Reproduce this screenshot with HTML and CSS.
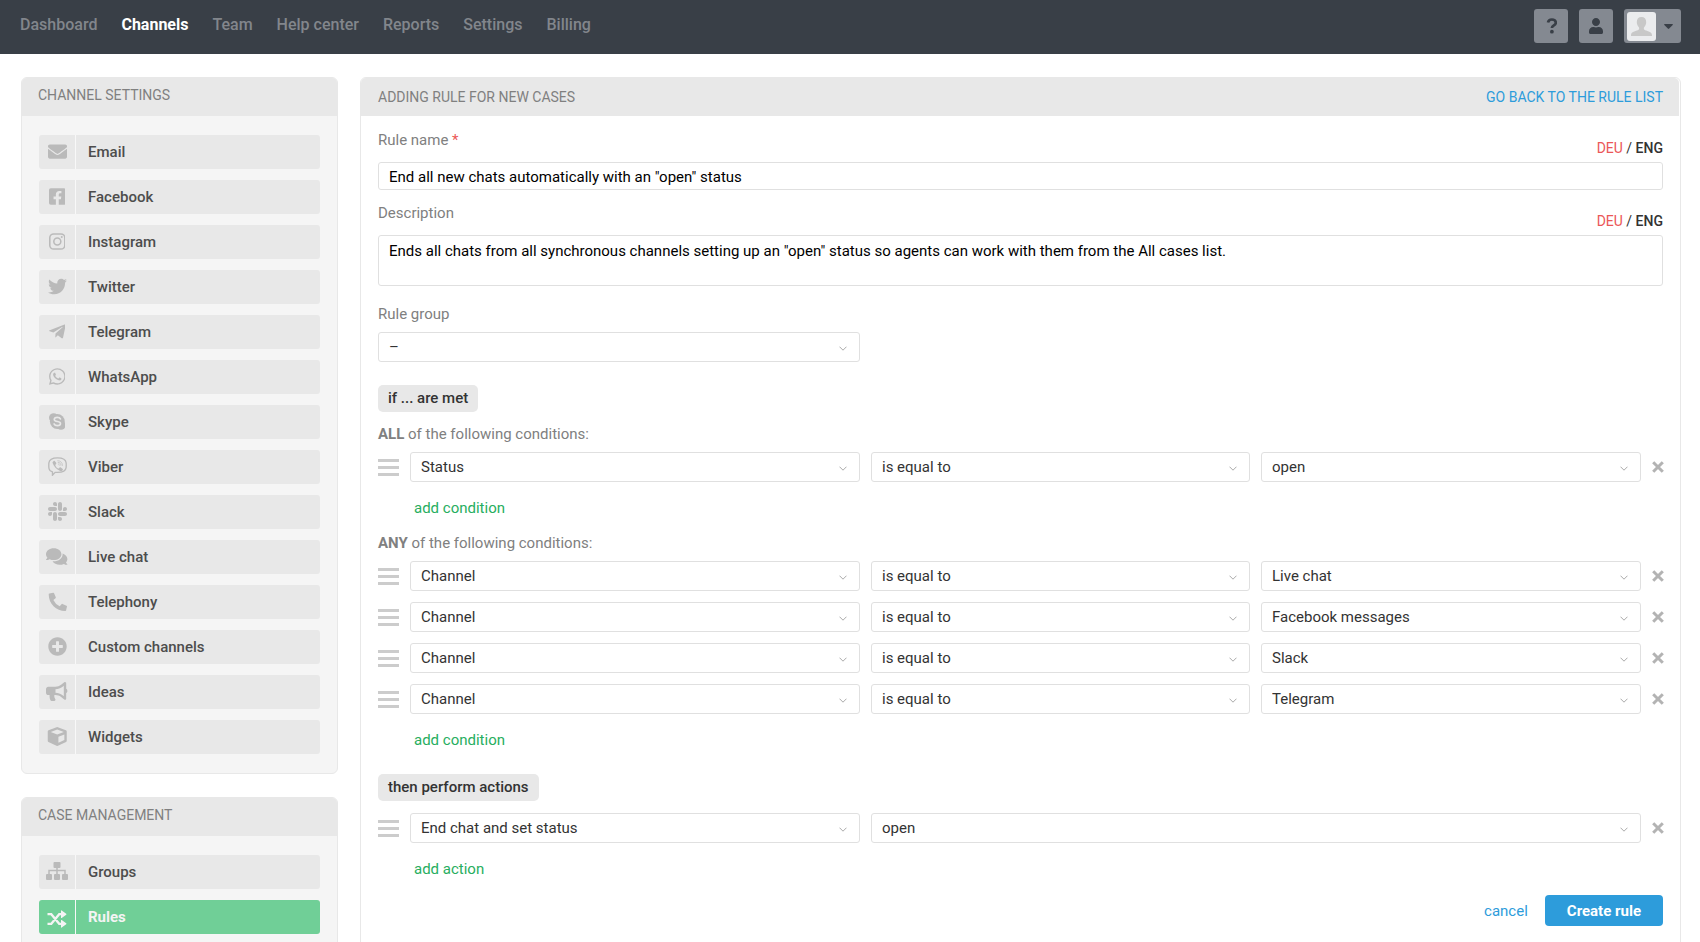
FILE: index.html
```html
<!DOCTYPE html>
<html lang="en">
<head>
<meta charset="utf-8">
<title>Adding rule for new cases</title>
<link rel="stylesheet" href="styles.css">
</head>
<body>
<svg class="sprite" aria-hidden="true">
  <symbol id="i-chevron" viewBox="0 0 8 5"><path d="M.5.7 4 4.200 7.500.7" fill="none" stroke="currentColor"/></symbol>
  <symbol id="i-close" viewBox="0 0 12 12"><path d="M1.200 1.200l9.600 9.600M10.800 1.200l-9.600 9.600" fill="none" stroke="currentColor" stroke-width="3"/></symbol>
</svg>

<header class="topbar">
  <nav class="topnav">
    <a href="#">Dashboard</a>
    <a href="#" class="current">Channels</a>
    <a href="#">Team</a>
    <a href="#">Help center</a>
    <a href="#">Reports</a>
    <a href="#">Settings</a>
    <a href="#">Billing</a>
  </nav>
  <div class="tools">
    <button type="button" class="tool" aria-label="Help"><svg width="12" height="16" viewBox="-1 0 12 16"><path d="M2 4.600C2.400 2.600 3.900 1.500 5.900 1.500c2.200 0 3.900 1.300 3.900 3.200 0 2.700-3.900 2.600-3.900 5.300" fill="none" stroke="currentColor" stroke-width="2.700"/><circle cx="5.900" cy="13.700" r="1.900" fill="currentColor"/></svg></button>
    <button type="button" class="tool" aria-label="Profile"><svg width="14" height="16" viewBox="0 0 448 512"><path fill="currentColor" d="M224 256c70.700 0 128-57.300 128-128S294.700 0 224 0 96 57.300 96 128s57.300 128 128 128zm89.600 32h-16.700c-22.200 10.200-46.900 16-72.900 16s-50.600-5.800-72.900-16h-16.700C60.200 288 0 348.200 0 422.400V464c0 26.500 21.500 48 48 48h352c26.500 0 48-21.500 48-48v-41.600c0-74.200-60.200-134.400-134.400-134.400z"/></svg></button>
    <button type="button" class="tool account" aria-label="Account menu">
      <span class="avatar"><svg width="21" height="19" viewBox="0 0 21 19"><path fill="#c8c8c8" d="M10.500 0c3 0 4.700 2 4.700 4.900 0 1.900-.7 3.900-1.900 5.200-.6.700-.7 2.100.1 2.700 1.400 1.200 7.600 1.500 7.600 5.200v1H0v-1c0-3.700 6.200-4 7.600-5.200.8-.6.7-2 .1-2.700-1.200-1.300-1.900-3.300-1.900-5.200C5.800 2 7.500 0 10.500 0z"/></svg></span>
      <svg width="9" height="5" viewBox="0 0 9 5"><path fill="currentColor" d="M.7 0h7.600q.9.200.4.900L5.200 4.600q-.7.600-1.400 0L.3.900Q-.2.200.7 0z"/></svg>
    </button>
  </div>
</header>

<div class="page">
  <aside class="sidebar">
    <section class="panel">
      <h2 class="panel-title">CHANNEL SETTINGS</h2>
      <ul class="menu">
        <li><a href="#"><span class="icon"><svg viewBox="0 0 512 512"><path d="M502.300 190.800c3.900-3.100 9.700-.2 9.700 4.700V400c0 26.500-21.500 48-48 48H48c-26.500 0-48-21.500-48-48V195.600c0-5 5.700-7.800 9.700-4.700 22.400 17.400 52.100 39.500 154.100 113.600 21.100 15.400 56.700 47.800 92.200 47.600 35.700.3 72-32.800 92.300-47.600 102-74.100 131.600-96.300 154-113.700zM256 320c23.200.4 56.600-29.200 73.400-41.400 132.700-96.300 142.800-104.700 173.400-128.700 5.800-4.500 9.200-11.500 9.200-18.900v-19c0-26.500-21.500-48-48-48H48c-26.500 0-48 21.500-48 48v19c0 7.400 3.400 14.300 9.200 18.900 30.600 23.900 40.700 32.400 173.400 128.700 16.800 12.200 50.200 41.800 73.400 41.400z"/></svg></span>Email</a></li>
        <li><a href="#"><span class="icon"><svg viewBox="0 0 448 512"><path d="M400 32H48A48 48 0 0 0 0 80v352a48 48 0 0 0 48 48h137.250V327.690h-63V256h63v-54.640c0-62.150 37-96.480 93.670-96.480 27.140 0 55.520 4.840 55.520 4.840v61h-31.270c-30.810 0-40.420 19.120-40.420 38.730V256h68.780l-11 71.690h-57.780V480H400a48 48 0 0 0 48-48V80a48 48 0 0 0-48-48z"/></svg></span>Facebook</a></li>
        <li><a href="#"><span class="icon"><svg viewBox="0 0 448 512"><g fill="none" stroke="currentColor" stroke-width="42"><rect x="21" y="53" width="406" height="406" rx="105"/><circle cx="224" cy="256" r="94"/></g><circle cx="343" cy="137" r="27"/></svg></span>Instagram</a></li>
        <li><a href="#"><span class="icon"><svg viewBox="0 0 512 512"><path d="M459.370 151.716c.325 4.548.325 9.097.325 13.645 0 138.720-105.583 298.558-298.558 298.558-59.452 0-114.680-17.219-161.137-47.106 8.447.974 16.568 1.299 25.340 1.299 49.055 0 94.213-16.568 130.274-44.832-46.132-.975-84.792-31.188-98.112-72.772 6.498.974 12.995 1.624 19.818 1.624 9.421 0 18.843-1.300 27.614-3.573-48.081-9.747-84.143-51.980-84.143-102.985v-1.299c13.969 7.797 30.214 12.670 47.431 13.319-28.264-18.843-46.781-51.005-46.781-87.391 0-19.492 5.197-37.360 14.294-52.954 51.655 63.675 129.300 105.258 216.365 109.807-1.624-7.797-2.599-15.918-2.599-24.040 0-57.828 46.782-104.934 104.934-104.934 30.213 0 57.502 12.670 76.670 33.137 23.715-4.548 46.456-13.320 66.599-25.340-7.798 24.366-24.366 44.833-46.132 57.827 21.117-2.273 41.584-8.122 60.426-16.243-14.292 20.791-32.161 39.308-52.628 54.253z"/></svg></span>Twitter</a></li>
        <li><a href="#"><span class="icon"><svg viewBox="0 0 448 512"><path d="M446.700 98.600l-67.600 318.800c-5.100 22.500-18.400 28.100-37.300 17.500l-103-75.900-49.700 47.800c-5.500 5.500-10.100 10.100-20.700 10.100l7.400-104.900 190.900-172.500c8.300-7.400-1.800-11.500-12.900-4.100L117.800 284 16.200 252.200c-22.100-6.900-22.500-22.100 4.600-32.700L418.200 66.400c18.400-6.900 34.500 4.100 28.500 32.200z"/></svg></span>Telegram</a></li>
        <li><a href="#"><span class="icon"><svg viewBox="0 0 448 512"><path d="M380.900 97.100C339 55.100 283.200 32 223.900 32c-122.400 0-222 99.600-222 222 0 39.100 10.200 77.300 29.600 111L0 480l117.700-30.900c32.400 17.700 68.900 27 106.100 27h.1c122.300 0 224.100-99.600 224.100-222 0-59.300-25.200-115-67.100-157zm-157 341.600c-33.200 0-65.700-8.900-94-25.700l-6.700-4-69.800 18.300L72 359.200l-4.400-7c-18.500-29.400-28.200-63.300-28.200-98.200 0-101.700 82.800-184.500 184.600-184.500 49.300 0 95.600 19.200 130.400 54.100 34.800 34.900 56.200 81.200 56.100 130.500 0 101.800-84.900 184.600-186.600 184.600zm101.200-138.200c-5.500-2.800-32.800-16.200-37.900-18-5.100-1.900-8.800-2.800-12.500 2.800-3.700 5.600-14.300 18-17.600 21.800-3.200 3.700-6.500 4.200-12 1.400-32.600-16.300-54-29.100-75.500-66-5.700-9.800 5.700-9.100 16.300-30.300 1.800-3.700.9-6.900-.5-9.700-1.400-2.800-12.500-30.100-17.100-41.200-4.500-10.800-9.100-9.300-12.500-9.500-3.200-.2-6.900-.2-10.600-.2-3.700 0-9.700 1.400-14.800 6.900-5.100 5.600-19.400 19-19.400 46.300 0 27.300 19.900 53.700 22.600 57.400 2.800 3.700 39.100 59.700 94.800 83.800 35.200 15.200 49 16.500 66.600 13.900 10.700-1.600 32.800-13.400 37.400-26.400 4.600-13 4.600-24.100 3.200-26.400-1.300-2.500-5-3.900-10.500-6.600z"/></svg></span>WhatsApp</a></li>
        <li><a href="#"><span class="icon"><svg viewBox="0 0 448 512"><circle cx="224" cy="256" r="200"/><circle cx="125" cy="157" r="125"/><circle cx="323" cy="355" r="125"/><path d="M308 186c-12-28-40-42-82-42-50 0-84 22-84 56 0 78 168 34 168 108 0 36-36 58-84 58-46 0-76-16-90-46" fill="none" stroke="#e8e8e8" stroke-width="44" stroke-linecap="round"/></svg></span>Skype</a></li>
        <li><a href="#"><span class="icon"><svg viewBox="0 0 512 512"><path d="M256 22C130 22 36 45 24 160c-5 60-5 100 3 150 8 52 43 78 93 92v88l72-76c26 2 45 2 64 2 126-1 220-24 232-130 5-50 5-90 0-130C476 45 382 22 256 22z" fill="none" stroke="currentColor" stroke-width="36"/><path d="M150 112c20-14 30-8 42 8l28 38c10 14 4 28-10 40-18 14-14 26-6 42 16 34 36 54 68 68 20 8 26-4 36-16 10-14 24-16 38-8l42 30c18 12 18 26 8 40-20 28-42 36-70 24-98-46-166-116-202-216-6-20 6-38 26-50z"/><path d="M264 100c80 4 122 50 126 128M272 144c50 4 74 32 76 80M278 188c18 2 28 12 28 32" fill="none" stroke="currentColor" stroke-width="18" stroke-linecap="round"/></svg></span>Viber</a></li>
        <li><a href="#"><span class="icon"><svg viewBox="0 32 448 448"><path d="M94.120 315.100c0 25.900-21.160 47.060-47.060 47.060S0 341 0 315.100c0-25.900 21.160-47.060 47.060-47.060h47.060v47.060zm23.720 0c0-25.900 21.160-47.060 47.060-47.060s47.060 21.160 47.060 47.060v117.840c0 25.900-21.160 47.060-47.060 47.060s-47.060-21.160-47.060-47.060V315.100zm47.060-188.980c-25.900 0-47.060-21.160-47.060-47.060S139 32 164.900 32s47.060 21.160 47.060 47.060v47.060H164.900zm0 23.720c25.900 0 47.060 21.160 47.060 47.060s-21.160 47.060-47.060 47.060H47.060C21.160 243.960 0 222.800 0 196.900s21.160-47.060 47.060-47.060H164.900zm188.980 47.060c0-25.900 21.160-47.060 47.060-47.060 25.900 0 47.060 21.160 47.060 47.060s-21.160 47.060-47.060 47.060h-47.060V196.900zm-23.720 0c0 25.900-21.160 47.060-47.060 47.060-25.900 0-47.060-21.160-47.060-47.060V79.060c0-25.900 21.160-47.060 47.060-47.060 25.900 0 47.060 21.160 47.060 47.060V196.900zM283.100 385.880c25.900 0 47.060 21.160 47.060 47.060 0 25.900-21.160 47.060-47.060 47.060-25.900 0-47.060-21.160-47.060-47.060v-47.060h47.060zm0-23.720c-25.900 0-47.060-21.160-47.060-47.060 0-25.900 21.160-47.060 47.060-47.060h117.840c25.900 0 47.060 21.160 47.060 47.060 0 25.900-21.160 47.060-47.060 47.060H283.100z"/></svg></span>Slack</a></li>
        <li><a href="#"><span class="icon"><svg viewBox="0 0 576 512"><path d="M416 192c0-88.400-93.100-160-208-160S0 103.600 0 192c0 34.300 14.100 65.900 38 92-13.400 30.200-35.500 54.200-35.800 54.500-2.200 2.300-2.800 5.700-1.500 8.700S4.800 352 8 352c36.600 0 66.900-12.300 88.700-25 32.200 15.700 70.300 25 111.300 25 114.900 0 208-71.600 208-160zm122 220c23.900-26 38-57.700 38-92 0-66.900-53.500-124.200-129.300-148.100.9 6.600 1.300 13.300 1.300 20.100 0 105.900-107.700 192-240 192-10.800 0-21.300-.8-31.700-1.900C207.800 439.600 281.800 480 368 480c41 0 79.100-9.200 111.300-25 21.800 12.700 52.100 25 88.700 25 3.200 0 6.100-1.900 7.300-4.800 1.300-2.900.7-6.300-1.500-8.700-.3-.3-22.400-24.200-35.800-54.500z"/></svg></span>Live chat</a></li>
        <li><a href="#"><span class="icon"><svg viewBox="-20 -20 532 532"><path d="M497.390 361.800l-112-48a24 24 0 0 0-28 6.900l-49.600 60.600A370.660 370.660 0 0 1 130.600 204.110l60.600-49.600a23.940 23.940 0 0 0 6.900-28l-48-112A24.160 24.160 0 0 0 122.600.61l-104 24A24 24 0 0 0 0 48c0 256.500 207.900 464 464 464a24 24 0 0 0 23.400-18.600l24-104a24.290 24.290 0 0 0-14.010-27.600z"/></svg></span>Telephony</a></li>
        <li><a href="#"><span class="icon"><svg viewBox="0 0 512 512"><path d="M256 8C119 8 8 119 8 256s111 248 248 248 248-111 248-248S393 8 256 8zm144 276c0 6.600-5.400 12-12 12h-92v92c0 6.600-5.400 12-12 12h-56c-6.600 0-12-5.400-12-12v-92h-92c-6.600 0-12-5.400-12-12v-56c0-6.600 5.400-12 12-12h92v-92c0-6.600 5.400-12 12-12h56c6.600 0 12 5.400 12 12v92h92c6.600 0 12 5.400 12 12v56z"/></svg></span>Custom channels</a></li>
        <li><a href="#"><span class="icon"><svg viewBox="0 0 576 512"><path d="M576 240c0-23.630-12.950-44.040-32-55.120V32.010C544 23.260 537.020 0 512 0c-7.120 0-14.190 2.380-19.980 7.020l-85.030 68.030C364.280 109.190 310.660 128 256 128H64c-35.350 0-64 28.650-64 64v96c0 35.350 28.650 64 64 64h33.700c-1.390 10.480-2.180 21.140-2.180 32 0 39.770 9.260 77.350 25.560 110.940 5.190 10.690 16.520 17.060 28.400 17.060h74.280c26.050 0 41.690-29.840 25.900-50.560-16.400-21.520-26.150-48.360-26.150-77.440 0-11.110 1.620-21.790 4.410-32H256c54.660 0 108.280 18.810 150.980 52.950l85.030 68.030a32.023 32.023 0 0 0 19.980 7.020c24.920 0 32-22.780 32-32V295.130C563.050 284.040 576 263.630 576 240zm-96 141.420l-33.050-26.440C392.950 311.780 325.120 288 256 288v-96c69.120 0 136.950-23.780 190.950-66.980L480 98.580v282.840z"/></svg></span>Ideas</a></li>
        <li><a href="#"><span class="icon"><svg viewBox="-20 0 532 512"><path fill-rule="evenodd" d="M239 6 22 87Q0 96 0 118v254q0 21 19 31l217 105q20 8 40 0l217-105q19-10 19-31V118q0-22-22-31L273 6q-17-6-34 0zM256 68 432 134 256 205 80 134zM288 427V265l160-65v147z"/></svg></span>Widgets</a></li>
      </ul>
    </section>
    <section class="panel">
      <h2 class="panel-title">CASE MANAGEMENT</h2>
      <ul class="menu">
        <li><a href="#"><span class="icon"><svg viewBox="0 0 22 19"><rect x="7.500" y="0" width="7" height="6" rx="1"/><rect x="0" y="12" width="6" height="6" rx="1"/><rect x="8" y="12" width="6" height="6" rx="1"/><rect x="16" y="12" width="6" height="6" rx="1"/><path d="M11 5v8M3 13V8.500h16V13" fill="none" stroke="currentColor" stroke-width="1.500"/></svg></span>Groups</a></li>
        <li><a href="#" class="active"><span class="icon"><svg viewBox="0 0 20 19"><g fill="none" stroke="currentColor" stroke-width="2.300"><path d="M.5 5.200h3.800L12.200 14.800H16M.5 14.800h3.800L12.200 5.200H16"/></g><path d="M14 1.700Q14 1 14.700 1.500L19.200 4.700q.5.500 0 1L14.700 8.900Q14 9.400 14 8.700zM14 11.300q0-.7.7-.2l4.500 3.200q.5.500 0 1l-4.500 3.200q-.7.500-.7-.2z"/></svg></span>Rules</a></li>
      </ul>
    </section>
  </aside>

  <main class="panel editor">
    <div class="editor-head">
      <h1>ADDING RULE FOR NEW CASES</h1>
      <a href="#">GO BACK TO THE RULE LIST</a>
    </div>
    <form class="editor-body">
      <div class="field">
        <div class="field-head">
          <label for="name">Rule name <span class="required">*</span></label>
          <span class="langs"><a href="#">DEU</a> / <b>ENG</b></span>
        </div>
        <input id="name" type="text" value="End all new chats automatically with an &quot;open&quot; status">
      </div>
      <div class="field">
        <div class="field-head">
          <label for="description">Description</label>
          <span class="langs"><a href="#">DEU</a> / <b>ENG</b></span>
        </div>
        <textarea id="description">Ends all chats from all synchronous channels setting up an "open" status so agents can work with them from the All cases list.</textarea>
      </div>
      <div class="field group-field">
        <label for="group">Rule group</label>
        <div class="row">
          <span class="select lead"><select id="group"><option>–</option></select><svg><use href="#i-chevron"/></svg></span>
        </div>
      </div>

      <h3 class="step">if ... are met</h3>
      <p class="match"><b>ALL</b> of the following conditions:</p>
      <div class="rows">
        <div class="row">
          <span class="handle"></span>
          <span class="select"><select aria-label="Field"><option>Status</option></select><svg><use href="#i-chevron"/></svg></span>
          <span class="select"><select aria-label="Operator"><option>is equal to</option></select><svg><use href="#i-chevron"/></svg></span>
          <span class="select"><select aria-label="Value"><option>open</option></select><svg><use href="#i-chevron"/></svg></span>
          <button type="button" class="remove" aria-label="Remove"><svg><use href="#i-close"/></svg></button>
        </div>
      </div>
      <a href="#" class="add">add condition</a>

      <p class="match any"><b>ANY</b> of the following conditions:</p>
      <div class="rows">
        <div class="row">
          <span class="handle"></span>
          <span class="select"><select aria-label="Field"><option>Channel</option></select><svg><use href="#i-chevron"/></svg></span>
          <span class="select"><select aria-label="Operator"><option>is equal to</option></select><svg><use href="#i-chevron"/></svg></span>
          <span class="select"><select aria-label="Value"><option>Live chat</option></select><svg><use href="#i-chevron"/></svg></span>
          <button type="button" class="remove" aria-label="Remove"><svg><use href="#i-close"/></svg></button>
        </div>
        <div class="row">
          <span class="handle"></span>
          <span class="select"><select aria-label="Field"><option>Channel</option></select><svg><use href="#i-chevron"/></svg></span>
          <span class="select"><select aria-label="Operator"><option>is equal to</option></select><svg><use href="#i-chevron"/></svg></span>
          <span class="select"><select aria-label="Value"><option>Facebook messages</option></select><svg><use href="#i-chevron"/></svg></span>
          <button type="button" class="remove" aria-label="Remove"><svg><use href="#i-close"/></svg></button>
        </div>
        <div class="row">
          <span class="handle"></span>
          <span class="select"><select aria-label="Field"><option>Channel</option></select><svg><use href="#i-chevron"/></svg></span>
          <span class="select"><select aria-label="Operator"><option>is equal to</option></select><svg><use href="#i-chevron"/></svg></span>
          <span class="select"><select aria-label="Value"><option>Slack</option></select><svg><use href="#i-chevron"/></svg></span>
          <button type="button" class="remove" aria-label="Remove"><svg><use href="#i-close"/></svg></button>
        </div>
        <div class="row">
          <span class="handle"></span>
          <span class="select"><select aria-label="Field"><option>Channel</option></select><svg><use href="#i-chevron"/></svg></span>
          <span class="select"><select aria-label="Operator"><option>is equal to</option></select><svg><use href="#i-chevron"/></svg></span>
          <span class="select"><select aria-label="Value"><option>Telegram</option></select><svg><use href="#i-chevron"/></svg></span>
          <button type="button" class="remove" aria-label="Remove"><svg><use href="#i-close"/></svg></button>
        </div>
      </div>
      <a href="#" class="add">add condition</a>

      <h3 class="step then">then perform actions</h3>
      <div class="rows actions">
        <div class="row">
          <span class="handle"></span>
          <span class="select"><select aria-label="Action"><option>End chat and set status</option></select><svg><use href="#i-chevron"/></svg></span>
          <span class="select wide"><select aria-label="Status"><option>open</option></select><svg><use href="#i-chevron"/></svg></span>
          <button type="button" class="remove" aria-label="Remove"><svg><use href="#i-close"/></svg></button>
        </div>
      </div>
      <a href="#" class="add">add action</a>

      <div class="buttons">
        <a href="#">cancel</a>
        <button type="submit" class="submit">Create rule</button>
      </div>
    </form>
  </main>
</div>
</body>
</html>
```
FILE: styles.css
```css
* { box-sizing: border-box; }

body {
  margin: 0;
  height: 100vh;
  overflow: hidden;
  background: #fff;
  color: #333;
  font: 15px/20px Roboto, "Liberation Sans", sans-serif;
}

a { color: #2d9cdb; text-decoration: none; }
h1, h2, h3, p, ul { margin: 0; padding: 0; font: inherit; }
button, input, select, textarea { font: inherit; margin: 0; }
svg { display: block; flex: none; }
.sprite { display: none; }

/* Top bar */
.topbar {
  display: flex;
  justify-content: space-between;
  height: 54px;
  padding: 9px 19px 0 20px;
  background: #393f47;
}
.topnav { display: flex; gap: 24px; padding-top: 6px; font-size: 16px; }
.topnav a { color: #82868c; font-weight: 500; }
.topnav .current { color: #fff; font-weight: 700; }
.tools { display: flex; gap: 11px; }
.tool {
  display: flex;
  align-items: center;
  justify-content: center;
  width: 34px;
  height: 34px;
  padding: 0;
  border: 0;
  border-radius: 3px;
  background: #848991;
  color: #393f47;
}
.account { justify-content: flex-start; gap: 8px; width: 57px; padding-left: 3px; }
.avatar {
  display: flex;
  align-items: center;
  justify-content: center;
  width: 29px;
  height: 29px;
  border-radius: 3px;
  background: #ebecee;
}

/* Layout */
.page { display: flex; align-items: flex-start; gap: 22px; padding: 23px 19px 23px 21px; }
.sidebar { display: flex; flex: none; flex-direction: column; gap: 23px; width: 317px; }
.panel { border: 1px solid #e8e8e8; border-radius: 6px; overflow: hidden; }

/* Sidebar */
.sidebar .panel { background: #f5f5f5; }
.panel-title {
  height: 38px;
  padding: 7px 16px 0;
  background: #e8e8e8;
  color: #808080;
  font-size: 14px;
}
.menu {
  display: flex;
  flex-direction: column;
  gap: 11px;
  padding: 19px 17px;
  list-style: none;
}
.menu a {
  display: flex;
  align-items: center;
  gap: 12px;
  height: 34px;
  border-radius: 3px;
  background: #e8e8e8;
  color: #4d4d4d;
  font-weight: 500;
}
.icon {
  display: flex;
  align-items: center;
  justify-content: center;
  width: 37px;
  height: 34px;
  padding-bottom: 2px;
  border-right: 1px solid #f8f8f8;
  color: #bababa;
}
.icon svg { height: 19px; fill: currentColor; }
.menu .active { background: #70cf97; color: #f4f4f4; font-weight: 700; }
.active .icon { padding: 2px 0 0; color: #f4f4f4; }

/* Editor */
.editor { flex: 1; min-width: 0; padding-right: 1px; }
.editor-head {
  display: flex;
  justify-content: space-between;
  height: 38px;
  padding: 9px 16px 0 17px;
  border-radius: 0 5px 0 0;
  background: #e8e8e8;
  color: #808080;
  font-size: 14px;
}
.editor-body { padding: 14px 16px 24px 17px; }
.field { margin-bottom: 13px; }
.field label { display: block; color: #808080; }
.field-head { display: flex; justify-content: space-between; height: 28px; margin-bottom: 4px; }
.required, .langs a { color: #eb5757; }
.langs { align-self: flex-end; font-size: 14px; }
.langs b { font-weight: 500; }
.field input, .field textarea {
  display: block;
  width: 100%;
  height: 28px;
  padding: 2px 10px 0;
  border: 1px solid #e0e0e0;
  border-radius: 3px;
  background: #fff;
  color: #000;
}
.field textarea { height: 51px; padding: 5px 10px; resize: none; }
.group-field { margin: 18px 0 23px; }
.group-field label { margin-bottom: 8px; }

.step {
  width: fit-content;
  height: 27px;
  padding: 3px 10px;
  border-radius: 5px;
  background: #e8e8e8;
  font-weight: 500;
}
.then { margin-top: 24px; }
.match { margin: 12px 0 8px; color: #808080; }
.match b { font-weight: 700; }
.any { margin-top: 15px; }

.rows { display: grid; gap: 11px; }
.actions { margin-top: 12px; }
.row {
  display: grid;
  grid-template-columns: 21px 450fr 379fr 380fr 11px;
  column-gap: 11px;
  align-items: center;
}
.lead, .wide { grid-column: span 2; }
.handle {
  height: 17px;
  border: solid #ccc;
  border-width: 3px 0;
  background: linear-gradient(#ccc, #ccc) center / 100% 3px no-repeat;
}
.select { display: grid; align-items: center; min-width: 0; }
.select select {
  grid-area: 1 / 1;
  appearance: none;
  width: 100%;
  height: 30px;
  padding: 0 30px 1px 10px;
  border: 1px solid #e0e0e0;
  border-radius: 3px;
  background: #fff;
  color: #333;
}
.select svg {
  grid-area: 1 / 1;
  justify-self: end;
  width: 8px;
  height: 5px;
  margin: 2px 13px 0 0;
  color: #aaa;
  pointer-events: none;
}
.remove { padding: 0; border: 0; background: none; color: #b3b3b3; }
.remove svg { width: 12px; height: 12px; }
.add { display: block; width: fit-content; margin: 16px 0 0 36px; color: #27ae60; }

.buttons { display: flex; align-items: center; justify-content: flex-end; gap: 17px; margin-top: 16px; }
.submit {
  height: 31px;
  padding: 0 22px;
  border: 0;
  border-radius: 4px;
  background: #2d9cdb;
  color: #fff;
  font-weight: 700;
}
```
